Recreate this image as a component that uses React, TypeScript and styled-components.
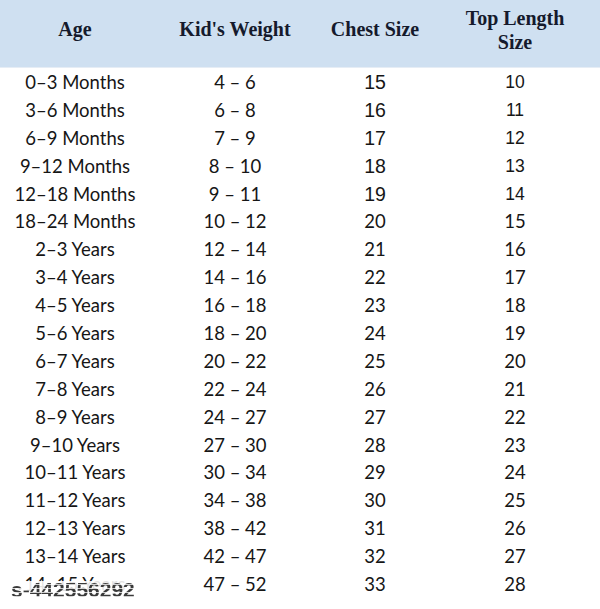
import styled, { createGlobalStyle } from 'styled-components'

const GlobalStyle = createGlobalStyle`
  html, body {
    margin: 0;
    padding: 0;
    background: #ffffff;
  }
`

type Row = { age: string; weight: string; chest: string; top: string }

const rows: Row[] = [
  { age: '0–3 Months', weight: '4 – 6', chest: '15', top: '10' },
  { age: '3–6 Months', weight: '6 – 8', chest: '16', top: '11' },
  { age: '6–9 Months', weight: '7 – 9', chest: '17', top: '12' },
  { age: '9–12 Months', weight: '8 – 10', chest: '18', top: '13' },
  { age: '12–18 Months', weight: '9 – 11', chest: '19', top: '14' },
  { age: '18–24 Months', weight: '10 – 12', chest: '20', top: '15' },
  { age: '2–3 Years', weight: '12 – 14', chest: '21', top: '16' },
  { age: '3–4 Years', weight: '14 – 16', chest: '22', top: '17' },
  { age: '4–5 Years', weight: '16 – 18', chest: '23', top: '18' },
  { age: '5–6 Years', weight: '18 – 20', chest: '24', top: '19' },
  { age: '6–7 Years', weight: '20 – 22', chest: '25', top: '20' },
  { age: '7–8 Years', weight: '22 – 24', chest: '26', top: '21' },
  { age: '8–9 Years', weight: '24 – 27', chest: '27', top: '22' },
  { age: '9–10 Years', weight: '27 – 30', chest: '28', top: '23' },
  { age: '10–11 Years', weight: '30 – 34', chest: '29', top: '24' },
  { age: '11–12 Years', weight: '34 – 38', chest: '30', top: '25' },
  { age: '12–13 Years', weight: '38 – 42', chest: '31', top: '26' },
  { age: '13–14 Years', weight: '42 – 47', chest: '32', top: '27' },
  { age: '14–15 Years', weight: '47 – 52', chest: '33', top: '28' },
]

const COLS = '150px 170px 110px 170px'

export default function App() {
  return (
    <>
      <GlobalStyle />
      <Chart>
        <HeaderRow>
          <HeadCell>Age</HeadCell>
          <HeadCell>Kid's Weight</HeadCell>
          <HeadCell>Chest Size</HeadCell>
          <HeadCell $twoLine>
            Top Length
            <br />
            Size
          </HeadCell>
        </HeaderRow>
        <Body>
          {rows.map((r, i) => (
            <DataRow key={r.age}>
              <Cell>{r.age}</Cell>
              <Cell>{r.weight}</Cell>
              <Cell $arial={i < 5}>{r.chest}</Cell>
              <Cell $arial={i < 5} $small>{r.top}</Cell>
            </DataRow>
          ))}
          <Watermark>
            <WatermarkText>s-442556292</WatermarkText>
          </Watermark>
        </Body>
      </Chart>
    </>
  )
}

const Chart = styled.div`
  width: 600px;
  height: 609px;
  background: #ffffff;
  overflow: hidden;
`

const HeaderRow = styled.div`
  display: grid;
  grid-template-columns: ${COLS};
  height: 67px;
  background: #cfe0f1;
  border-bottom: 1px solid #e6edf5;
  align-items: center;
`

const HeadCell = styled.div<{ $twoLine?: boolean }>`
  text-align: center;
  font-family: 'Liberation Serif', 'Times New Roman', serif;
  font-weight: 700;
  font-size: 20px;
  line-height: 24px;
  color: #151a2c;
  margin-top: ${(p) => (p.$twoLine ? '-8px' : '-9px')};
`

const Body = styled.div`
  position: relative;
`

const DataRow = styled.div`
  display: grid;
  grid-template-columns: ${COLS};
  height: 27.9px;
  align-items: center;
`

const Cell = styled.div<{ $arial?: boolean; $small?: boolean }>`
  text-align: center;
  color: #161616;
  font-family: ${(p) =>
    p.$arial ? "'Liberation Sans', Arial, sans-serif" : "Lato, 'Open Sans', sans-serif"};
  font-size: ${(p) => (p.$arial ? (p.$small ? '17.5px' : '19.5px') : '18.5px')};
  line-height: 22px;
`

const Watermark = styled.div`
  position: absolute;
  left: 8px;
  bottom: 0px;
  height: 17px;
  padding: 0 3px;
  display: flex;
  align-items: center;
  background: rgba(255, 255, 255, 0.88);
`

const WatermarkText = styled.span`
  font-family: 'Liberation Sans', Arial, sans-serif;
  font-weight: 700;
  font-size: 21px;
  line-height: 17px;
  background: repeating-linear-gradient(
    to bottom,
    #3a3a3a 0px,
    #3a3a3a 3px,
    #cfcfcf 3px,
    #cfcfcf 4px
  );
  -webkit-background-clip: text;
  background-clip: text;
  color: transparent;
`
